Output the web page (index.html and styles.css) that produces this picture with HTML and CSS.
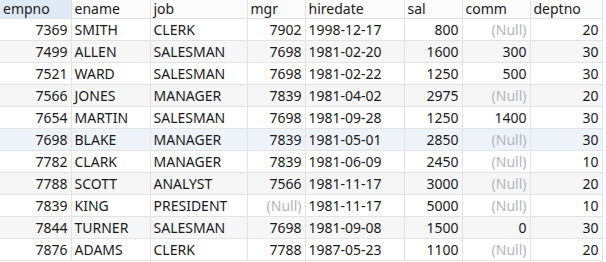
FILE: index.html
```html
<!DOCTYPE html>
<html lang="en">
<head>
  <meta charset="UTF-8" />
  <title>emp</title>
  <link rel="stylesheet" href="styles.css">
</head>
<body>
  <table class="grid">
    <colgroup>
      <col style="width:71px"><col style="width:79px"><col style="width:97px"><col style="width:58px">
      <col style="width:99px"><col style="width:58px"><col style="width:68px"><col style="width:72px">
    </colgroup>
    <thead>
      <tr>
        <th class="active">empno</th><th>ename</th><th>job</th><th>mgr</th>
        <th>hiredate</th><th>sal</th><th>comm</th><th>deptno</th>
      </tr>
    </thead>
    <tbody>
      <tr><td class="num">7369</td><td>SMITH</td><td>CLERK</td><td class="num">7902</td><td>1998-12-17</td><td class="num">800</td><td class="num null">(Null)</td><td class="num">20</td></tr>
      <tr><td class="num">7499</td><td>ALLEN</td><td>SALESMAN</td><td class="num">7698</td><td>1981-02-20</td><td class="num">1600</td><td class="num">300</td><td class="num">30</td></tr>
      <tr><td class="num">7521</td><td>WARD</td><td>SALESMAN</td><td class="num">7698</td><td>1981-02-22</td><td class="num">1250</td><td class="num">500</td><td class="num">30</td></tr>
      <tr><td class="num">7566</td><td>JONES</td><td>MANAGER</td><td class="num">7839</td><td>1981-04-02</td><td class="num">2975</td><td class="num null">(Null)</td><td class="num">20</td></tr>
      <tr><td class="num">7654</td><td>MARTIN</td><td>SALESMAN</td><td class="num">7698</td><td>1981-09-28</td><td class="num">1250</td><td class="num">1400</td><td class="num">30</td></tr>
      <tr class="hover"><td class="num">7698</td><td>BLAKE</td><td>MANAGER</td><td class="num">7839</td><td>1981-05-01</td><td class="num">2850</td><td class="num null">(Null)</td><td class="num">30</td></tr>
      <tr><td class="num">7782</td><td>CLARK</td><td>MANAGER</td><td class="num">7839</td><td>1981-06-09</td><td class="num">2450</td><td class="num null">(Null)</td><td class="num">10</td></tr>
      <tr><td class="num">7788</td><td>SCOTT</td><td>ANALYST</td><td class="num">7566</td><td>1981-11-17</td><td class="num">3000</td><td class="num null">(Null)</td><td class="num">20</td></tr>
      <tr><td class="num">7839</td><td>KING</td><td>PRESIDENT</td><td class="num null">(Null)</td><td>1981-11-17</td><td class="num">5000</td><td class="num null">(Null)</td><td class="num">10</td></tr>
      <tr><td class="num">7844</td><td>TURNER</td><td>SALESMAN</td><td class="num">7698</td><td>1981-09-08</td><td class="num">1500</td><td class="num">0</td><td class="num">30</td></tr>
      <tr><td class="num">7876</td><td>ADAMS</td><td>CLERK</td><td class="num">7788</td><td>1987-05-23</td><td class="num">1100</td><td class="num null">(Null)</td><td class="num">20</td></tr>
    </tbody>
  </table>
</body>
</html>
```

FILE: styles.css
```css
body {
  margin: 0;
  background: #fff;
  font-family: "Noto Sans", Arial, sans-serif;
  font-size: 14px;
  color: #1a1a1a;
}
.grid {
  border-collapse: collapse;
  table-layout: fixed;
  width: 602px;
}
.grid th,
.grid td {
  border: 1px solid #e3e3e3;
  padding: 0 3px;
  white-space: nowrap;
  overflow: hidden;
  text-align: left;
  font-weight: normal;
}
.grid th {
  height: 18px;
  line-height: 18px;
  background: #fbfbfb;
  border-top: none;
}
.grid th.active {
  background: #dfeaf7;
}
.grid td {
  height: 21px;
  line-height: 21px;
}
.grid tr > :first-child {
  border-left: none;
}
.grid tbody tr:nth-child(even) {
  background: #f6f6f6;
}
.grid tbody tr.hover {
  background: #eef3fa;
}
.grid td.num {
  text-align: right;
}
.grid td.null {
  color: #b4b4c0;
}
```
